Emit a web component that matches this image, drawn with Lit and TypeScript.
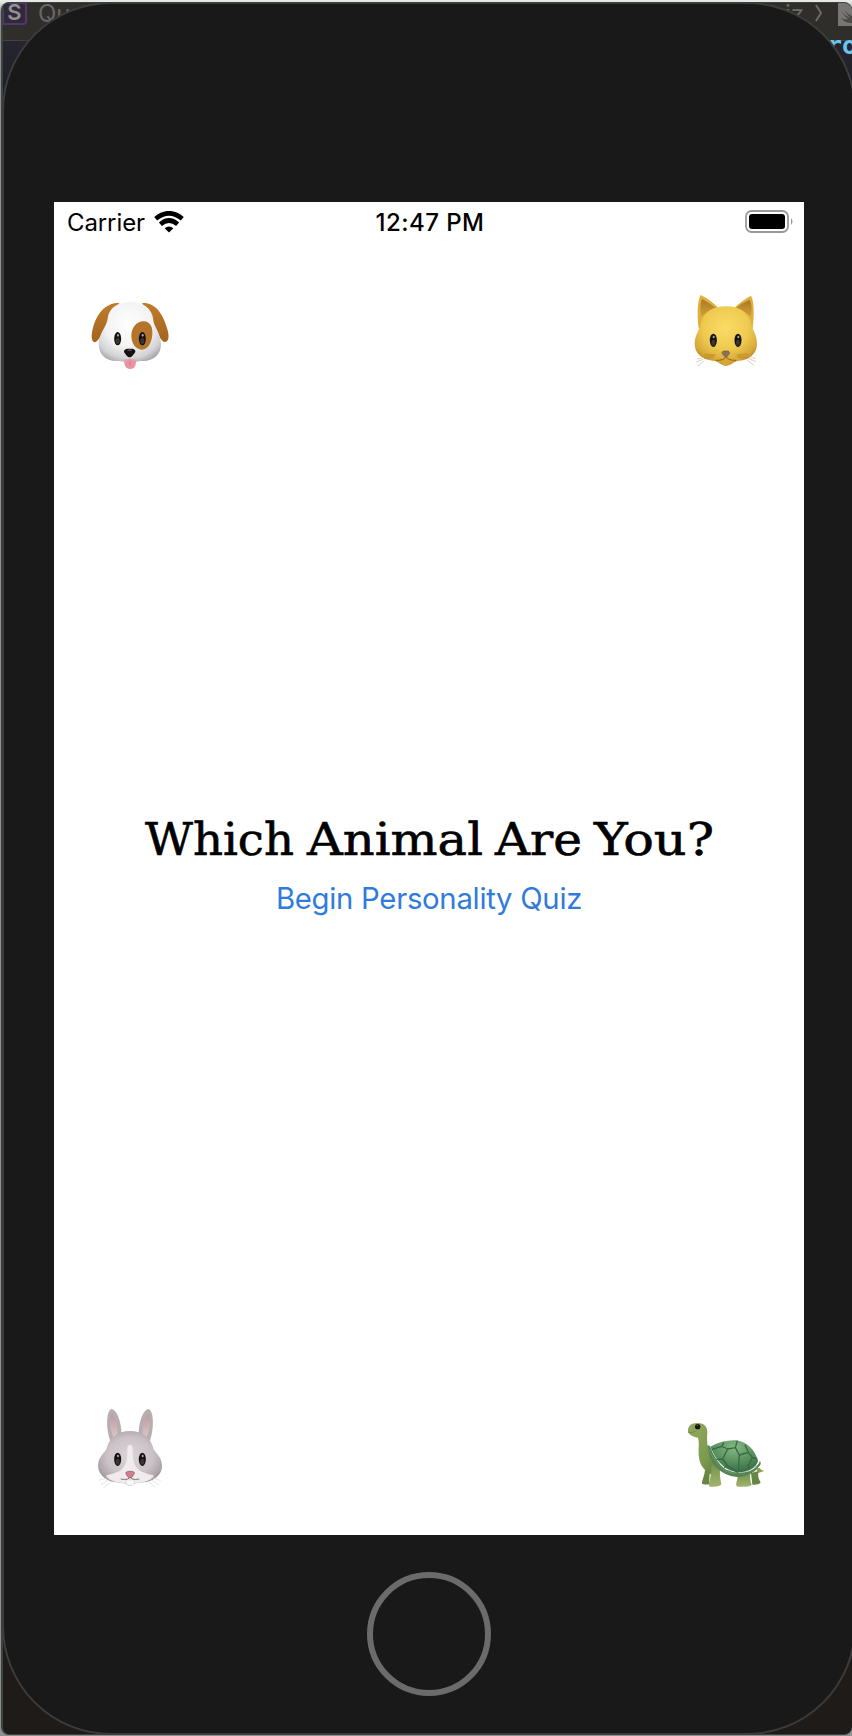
import { LitElement, html, css, svg } from "lit";
import { customElement } from "lit/decorators.js";

const eye = (x: number, y: number) => svg`
  <ellipse cx=${x} cy=${y} rx="10.5" ry="20" fill="#15110e"/>
  <ellipse cx=${x} cy=${y + 7} rx="6" ry="9" fill="#383736"/>
  <ellipse cx=${x + 1} cy=${y - 10} rx="3" ry="4" fill="#aaa"/>`;

@customElement("dog-face")
class DogFace extends LitElement {
  static styles = css`:host{display:block} svg{display:block}`;
  render() {
    return html`<svg width="100" height="95" viewBox="0 0 300 285">
      <defs>
        <radialGradient id="f" cx=".48" cy=".36" r=".68"><stop offset="0" stop-color="#fff"/><stop offset=".55" stop-color="#f3f3f4"/><stop offset=".85" stop-color="#d3d2d5"/><stop offset="1" stop-color="#aaa8ab"/></radialGradient>
        <linearGradient id="e" x1="0" y1="0" x2="0" y2="1"><stop offset="0" stop-color="#bf7c2d"/><stop offset="1" stop-color="#a3641c"/></linearGradient>
      </defs>
      <path d="M118 54C78 52 50 84 38 132C32 158 36 172 45 172C62 166 78 120 118 54Z" fill="url(#e)"/>
      <path d="M186 54C226 52 248 84 262 132C270 160 264 171 254 171C238 168 226 124 186 54Z" fill="url(#e)"/>
      <path d="M150 51C186 50 217 68 220 105C221 124 243 144 243 178C243 212 216 229 190 228C174 227 168 232 150 232C132 232 126 227 106 228C80 228 56 210 56 178C56 146 82 122 83 100C87 67 116 51 150 51Z" fill="url(#f)"/>
      <path d="M188 109C211 107 219 128 217 148C215 173 205 194 186 194C165 193 154 174 154 151C155 128 168 111 188 109Z" fill="#b4742a"/>
      ${eye(113, 161)}${eye(187, 161)}
      <path d="M133 225C136 221 165 221 168 225C168 243 164 252 150 252C137 251 132 242 133 225Z" fill="#ea93a2"/>
      <path d="M150 228V241" stroke="#d66f87" stroke-width="3"/>
      <path d="M122 222Q147 232 149 214Q152 232 178 222" fill="none" stroke="#c4c2c4" stroke-width="3"/>
      <path d="M149 191C163 190 170 196 164 204C158 212 154 217 149 217C143 217 138 210 134 204C128 196 136 190 149 191Z" fill="#15110f"/>
      <ellipse cx="149" cy="196" rx="8" ry="2.5" fill="#555"/>
    </svg>`;
  }
}

@customElement("cat-face")
class CatFace extends LitElement {
  static styles = css`:host{display:block} svg{display:block}`;
  render() {
    return html`<svg width="100" height="95" viewBox="0 0 300 285">
      <defs>
        <radialGradient id="f" cx=".5" cy=".36" r=".66"><stop offset="0" stop-color="#fbdb67"/><stop offset=".55" stop-color="#efca50"/><stop offset=".85" stop-color="#d8a939"/><stop offset="1" stop-color="#b98728"/></radialGradient>
        <linearGradient id="e" x1="0" y1="0" x2="0" y2="1"><stop offset="0" stop-color="#a97825"/><stop offset="1" stop-color="#d2a136"/></linearGradient>
      </defs>
      <path d="M56 130C50 85 53 45 62 30Q92 44 118 72L140 92L160 72Q188 44 213 32C223 50 223 90 218 130Z" fill="#dfb13c"/>
      <path d="M63 95Q58 60 66 42Q90 54 112 73Q82 80 63 95Z" fill="url(#e)"/>
      <path d="M213 95Q218 60 209 44Q184 54 162 73Q194 80 213 95Z" fill="url(#e)"/>
      <path d="M138 64C182 64 207 84 214 116C218 136 231 150 231 176C231 208 206 224 178 227C160 228 154 242 138 242C122 242 118 228 98 227C68 223 45 208 44 176C44 150 58 137 62 116C69 83 96 64 138 64Z" fill="url(#f)"/>
      <path d="M77 209L104 211M75 218L100 216M173 211L201 208M176 216L202 218" stroke="#b88324" stroke-width="6" stroke-linecap="round" opacity=".5"/>
      ${eye(100, 166)}${eye(174, 166)}
      <path d="M107 226Q133 227 138 214Q143 227 169 226Q151 228 147 239Q138 244 130 239Q125 228 107 226Z" fill="#d6a637"/>
      <path d="M107 226Q133 227 138 214Q143 227 169 226" fill="none" stroke="#8d641e" stroke-width="3"/>
      <path d="M137 198C149 197 151 203 146 209Q138 221 130 210C123 202 126 198 137 198Z" fill="#8a715a" stroke="#6f5433" stroke-width="2"/>
      <path d="M70 223L47 231M72 228L54 243M205 220L228 230M202 226L222 241M64 220L50 222M212 217L227 221" fill="none" stroke="#c9b99c" stroke-width="2"/>
    </svg>`;
  }
}

@customElement("rabbit-face")
class RabbitFace extends LitElement {
  static styles = css`:host{display:block} svg{display:block}`;
  render() {
    return html`<svg width="100" height="105" viewBox="0 0 300 315">
      <defs>
        <radialGradient id="f" cx=".5" cy=".48" r=".6"><stop offset="0" stop-color="#dcd5d9"/><stop offset=".6" stop-color="#cac2c6"/><stop offset=".87" stop-color="#aea5a9"/><stop offset="1" stop-color="#93898d"/></radialGradient>
        <linearGradient id="p" x1="0" y1="0" x2="0" y2="1"><stop offset="0" stop-color="#b99ca2"/><stop offset="1" stop-color="#dfc3c9"/></linearGradient>
      </defs>
      <path d="M92 142C76 98 79 48 94 42C112 44 126 86 124 126Z" fill="#b7aeb2"/>
      <path d="M208 142C224 98 221 48 206 42C188 44 174 86 176 126Z" fill="#b7aeb2"/>
      <path d="M100 126C87 96 88 63 96 57C108 68 114 98 112 121Z" fill="url(#p)"/>
      <path d="M200 126C213 96 212 63 204 57C192 68 186 98 188 121Z" fill="url(#p)"/>
      <path d="M150 108C188 108 212 129 219 157C222 173 246 183 246 212C246 243 216 262 181 263C168 263 161 267 150 267C138 267 132 263 119 263C84 262 55 243 54 212C54 183 78 173 81 157C88 129 112 108 150 108Z" fill="url(#f)"/>
      <path d="M150 150C159 150 158 158 158 174C158 198 164 214 178 226C194 236 212 238 222 242C212 255 196 262 176 263C163 264 158 267 150 267C142 267 137 264 124 263C104 262 88 255 78 242C88 238 106 236 122 226C136 214 142 198 142 174C142 158 141 150 150 150Z" fill="#f0ecee"/>
      ${eye(113, 193)}${eye(187, 193)}
      <path d="M138 254H163V267Q159 274 151 271Q142 274 138 267Z" fill="#f6f6f6" stroke="#c9c5c7" stroke-width="1.5"/>
      <path d="M122 252Q147 257 150 244Q154 257 178 252" fill="none" stroke="#81767a" stroke-width="3"/>
      <path d="M150 229C163 229 166 233 161 239Q156 249 150 249Q144 248 139 239C135 232 139 229 150 229Z" fill="#cf7f90" stroke="#885061" stroke-width="2"/>
      <path d="M91 252L62 269M96 257L70 279M84 247L57 256M208 252L237 270M202 257L226 277M215 247L242 257" stroke="#dad7d8" stroke-width="2"/>
    </svg>`;
  }
}

@customElement("turtle-figure")
class TurtleFigure extends LitElement {
  static styles = css`:host{display:block} svg{display:block}`;
  render() {
    return html`<svg width="100" height="95" viewBox="0 0 300 285">
      <defs>
        <linearGradient id="b" x1="0" y1="0" x2="1" y2="1"><stop offset="0" stop-color="#93aa5c"/><stop offset=".6" stop-color="#7d9a50"/><stop offset="1" stop-color="#55733a"/></linearGradient>
        <linearGradient id="l" x1="0" y1="0" x2="0" y2="1"><stop offset="0" stop-color="#76944b"/><stop offset="1" stop-color="#a2b56e"/></linearGradient>
        <radialGradient id="s" cx=".5" cy=".22" r=".75"><stop offset="0" stop-color="#86b885"/><stop offset=".5" stop-color="#5f9763"/><stop offset="1" stop-color="#3c7048"/></radialGradient>
      </defs>
      <path d="M242 190L255 189L258 194L268 198L250 204Z" fill="#8e9f4c"/>
      <path d="M90 190L105 192L102 238Q92 240 81 236C80 226 90 212 90 190Z" fill="#668744"/>
      <path d="M228 204L250 198Q247 218 257 232Q254 240 232 239Z" fill="#668744"/>
      <path d="M67 54C87 53 98 66 97 82C95 104 96 128 107 150L137 187L120 214C96 203 82 190 76 174C66 145 75 116 69 98C57 96 42 90 39 80C37 64 49 54 67 54Z" fill="url(#b)"/>
      <path d="M109 181Q123 174 136 184Q132 206 139 238Q135 247 104 245Q99 240 104 226Q109 208 109 181Z" fill="url(#l)"/>
      <path d="M190 211L226 207Q223 219 230 239Q226 247 187 245Q181 241 184 233Z" fill="url(#l)"/>
      <path d="M97 122Q100 118 105 124Q120 169 151 193Q187 210 225 198Q247 188 255 168Q260 176 253 184Q231 213 190 217Q151 216 120 184Q101 158 97 122Z" fill="#568456"/>
      <path d="M106 125C132 111 157 105 182 106C216 110 241 136 249 169C242 190 219 202 193 202C157 200 125 175 106 125Z" fill="url(#s)"/>
      <path d="M111 133L140 124L158 132L181 128L187 107M140 124L147 112M158 132L143 162L124 164M143 162L157 181L190 205M181 128L193 150L190 199M193 150L220 142L232 157L220 183L222 195M220 142L210 119M232 157L247 162M157 181L148 188" fill="none" stroke="#376a42" stroke-width="4" stroke-linejoin="round"/>
      <path d="M98 124Q112 166 149 197Q195 219 250 179" fill="none" stroke="#86a86b" stroke-width="3" opacity=".5"/>
      <circle cx="68" cy="65" r="8" fill="#141711"/><circle cx="67" cy="61" r="1.6" fill="#8c9a74"/>
      <path d="M40 82Q51 84 61 79" fill="none" stroke="#597837" stroke-width="2"/>
    </svg>`;
  }
}

@customElement("app-root")
class AppRoot extends LitElement {
  static styles = css`
    :host{display:block}
    *{box-sizing:border-box}
    .desktop{width:852px;height:1736px;overflow:hidden;display:grid;background:linear-gradient(#e4ebe5 0 2px,#8c908e 12px);font-family:Inter,sans-serif}
    .window,.device{grid-area:1/1}
    .window{margin:2px 0 0 1px;width:851px;height:1733px;border:1px solid #3d4241;border-width:1px 0 1px 2px;border-radius:8px;overflow:hidden;background:#1e1b19;display:flex;flex-direction:column}
    .toolbar{height:38px;flex:none;background:#302e2b;border-bottom:1px solid #43413c;display:flex;align-items:flex-start;justify-content:space-between}
    .crumbs{display:flex;font-size:24px;line-height:16px;color:#686765}
    .scheme{width:25px;height:23px;margin:-1px 11px 0 -1px;background:#30293a;border:2px solid #50376c;border-radius:0 0 4px 0;color:#929092;font-size:22px;font-weight:600;line-height:17px;text-align:center}
    .crumb{padding-top:3px}
    .chevron{display:block;margin:1px 15px 0 11px}
    .code{height:90px;flex:none;background:linear-gradient(#24252d,#1b1d23);color:#6cc5e9;text-align:right;font:700 25px/26px "DejaVu Sans Mono",monospace}
    .token{display:block;margin:-8px -5px 0 0}
    .device{width:854px;height:1733px;margin:2px 0 0 2px;border:2px solid #3c3c3d;border-radius:109px;background:#191919;padding:198px 50px 0;display:flex;flex-direction:column;align-items:center}
    .screen{width:750px;height:1333px;flex:none;background:#fff;display:flex;flex-direction:column}
    .status{height:40px;flex:none;display:grid;grid-template-columns:1fr auto 1fr;align-items:center;padding:2px 11px 0 13px;font-size:24px;line-height:30px;color:#000}
    .carrier{display:flex;align-items:center;gap:9px}
    .name{letter-spacing:-.1px}
    .time{font-weight:500;letter-spacing:.45px}
    .battery{justify-self:end;display:block;margin-top:-3px}
    .wifi{display:block;margin-top:-2px}
    .row{display:flex;justify-content:space-between;align-items:flex-end;padding:0 24px 0 26px;flex:none}
    .top{padding-top:43px}
    .bottom{padding-bottom:35px}
    .turtle{margin-right:5px}
    .center{flex:1;display:flex;flex-direction:column;align-items:center;padding-top:432px}
    .title{display:block;overflow:visible}
    .heading{font-family:"DejaVu Serif",serif;font-size:45px;fill:#000;stroke:#000;stroke-width:.6px}
    .begin{border:0;background:none;padding:0;margin-top:25px;font:400 29.3px/36px Inter,sans-serif;color:#307bdc;white-space:nowrap;letter-spacing:-.28px}
    .home{width:124px;height:124px;flex:none;margin-top:37px;border:6px solid #6b6b6b;border-radius:50%}
  `;
  render() {
    return html`<div class="desktop">
      <div class="window">
        <div class="toolbar">
          <div class="crumbs"><span class="scheme">S</span><span class="crumb">Qu</span></div>
          <div class="crumbs"><span class="crumb">iz</span>
            <svg class="chevron" width="8" height="18" viewBox="0 0 8 18"><path d="M1 1L6 9L1 17" fill="none" stroke="#6b6966" stroke-width="2"/></svg>
            <svg width="14" height="23" viewBox="0 0 14 23"><path d="M0 0H14V23H0Z" fill="#777674"/><path d="M3 8Q7 13 12 15L6 7Q10 11 14 13V20Q6 20 3 15Q7 17 10 16Q6 13 3 8Z" fill="#4b4a49"/></svg>
          </div>
        </div>
        <div class="code"><span class="token">ro</span></div>
      </div>
      <div class="device">
        <main class="screen">
          <div class="status">
            <div class="carrier"><span class="name">Carrier</span>
              <svg class="wifi" width="30" height="22" viewBox="0 0 30 22"><g fill="none" stroke="#000" stroke-width="4.6"><path d="M1.7 7.7Q15-3.2 28.3 7.7"/><path d="M6.4 13.2Q15 5.8 23.6 13.2"/></g><path d="M10.6 17.2Q15 13.6 19.4 17.2L15 21.5Z"/></svg>
            </div>
            <div class="time">12:47 PM</div>
            <svg class="battery" width="48" height="23" viewBox="0 0 48 23"><rect x="1" y="1" width="42" height="21" rx="5.5" fill="none" stroke="#999" stroke-width="1.8"/><rect x="4" y="4" width="36" height="15" rx="3"/><path d="M46 8Q49 11.5 46 15Z" fill="#999"/></svg>
          </div>
          <div class="row top"><dog-face></dog-face><cat-face></cat-face></div>
          <div class="center">
            <svg class="title" width="569" height="44" role="heading"><text class="heading" y="43"><tspan x="0" textLength="149" lengthAdjust="spacingAndGlyphs">Which</tspan> <tspan x="162" textLength="176" lengthAdjust="spacingAndGlyphs">Animal</tspan> <tspan x="350" textLength="87" lengthAdjust="spacingAndGlyphs">Are</tspan> <tspan x="449" textLength="120" lengthAdjust="spacingAndGlyphs">You?</tspan></text></svg>
            <button class="begin">Begin Personality Quiz</button>
          </div>
          <div class="row bottom"><rabbit-face></rabbit-face><turtle-figure class="turtle"></turtle-figure></div>
        </main>
        <div class="home"></div>
      </div>
    </div>`;
  }
}
